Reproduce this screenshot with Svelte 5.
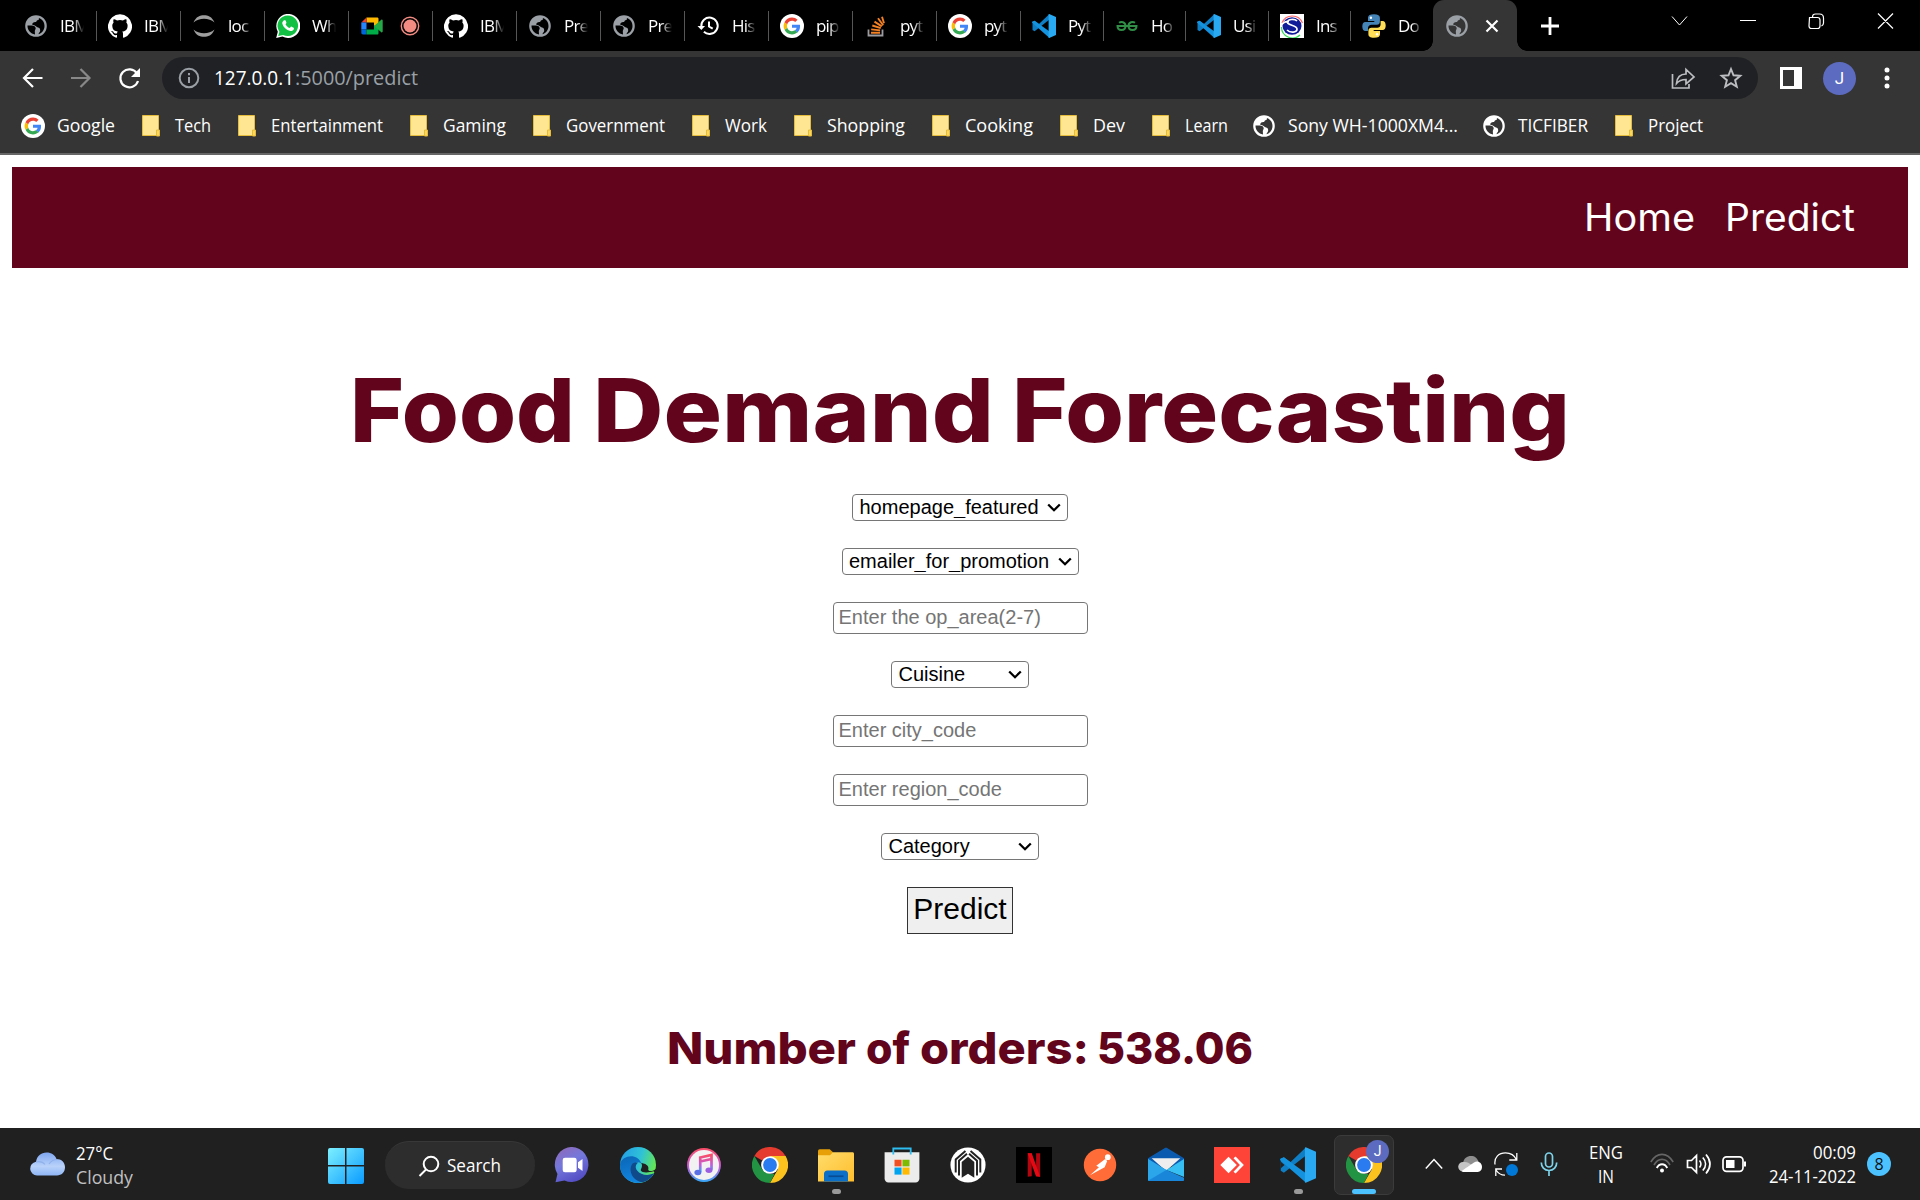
<script>
  const tabs = [
    { icon: 'globe', label: 'IBM', w: 84 },
    { icon: 'github', label: 'IBM', w: 84 },
    { icon: 'jupyter', label: 'loc', w: 84 },
    { icon: 'whatsapp', label: 'Wh', w: 84 },
    { icon: 'meet', label: '', w: 84 },
    { icon: 'github', label: 'IBM', w: 84 },
    { icon: 'globe', label: 'Pre', w: 84 },
    { icon: 'globe', label: 'Pre', w: 84 },
    { icon: 'history', label: 'His', w: 84 },
    { icon: 'google', label: 'pip', w: 84 },
    { icon: 'stack', label: 'pyt', w: 84 },
    { icon: 'google', label: 'pyt', w: 84 },
    { icon: 'vscode', label: 'Pyt', w: 83 },
    { icon: 'geeks', label: 'Ho', w: 82 },
    { icon: 'vscode', label: 'Usi', w: 83 },
    { icon: 'scaler', label: 'Ins', w: 82 },
    { icon: 'python', label: 'Do', w: 82 }
  ];
  const bookmarks = [
    ['google', 'Google', 58], ['folder', 'Tech', 36], ['folder', 'Entertainment', 112],
    ['folder', 'Gaming', 63], ['folder', 'Government', 99], ['folder', 'Work', 42],
    ['folder', 'Shopping', 78], ['folder', 'Cooking', 68], ['folder', 'Dev', 32],
    ['folder', 'Learn', 43], ['globe', 'Sony WH-1000XM4...', 170], ['globe', 'TICFIBER', 70],
    ['folder', 'Project', 55]
  ];
  const apps = ['chat', 'edge', 'itunes', 'chrome', 'explorer', 'store', 'hex', 'netflix', 'postman', 'mail', 'anydesk', 'vscode', 'chrome'];
</script>

{#snippet fit(text, w, kind = '')}
  <svg class="fit {kind}" width={w} height="24"><text x="0" y="18" textLength={w} lengthAdjust="spacingAndGlyphs">{text}</text></svg>
{/snippet}

{#snippet dropdown(label, kind)}
  <div class="dropdown {kind}">
    <select><option>{label}</option></select>
    <svg width="14" height="9"><path d="m1.200 1.500 5.800 5.700 5.800-5.700" fill="none" stroke="#000" stroke-width="2.300"/></svg>
  </div>
{/snippet}

{#snippet icon(name)}
  <svg class="icon {name}" viewBox="0 0 24 24">
    {#if name === 'globe'}
      <path fill="currentColor" d="M12 1.2a10.800 10.800 0 1 0 0 21.600a10.800 10.800 0 0 0 0-21.600zM11 20.400C6.600 19.800 3.500 16.200 3.500 12v-.6h4.300c2.300 0 3.900 1.200 3.900 2.900 0 1.200-.9 1.700-.9 3zm3.600-.2c-.2-1.300 1.600-1.900 1.600-3.700 0-3.300-2.600-2.400-3.900-3.900-1-1.200-1.900-1.700-3.900-1.700-.4-2.100 1.200-2.900 2.900-2.900 1.800 0 .8-1.800 2.700-2 .8-.1 1-.9.9-2.100 3.300 1 5.600 4.200 5.600 8.100 0 3.900-2.500 7.100-5.900 8.200z"/>
    {:else if name === 'github'}
      <path fill="#fff" d="M12 .3a12 12 0 0 0-3.8 23.400c.6.1.8-.3.8-.6v-2c-3.300.7-4-1.600-4-1.600-.600-1.400-1.400-1.800-1.400-1.800-1-.7.1-.7.1-.7 1.200 0 1.900 1.200 1.900 1.200 1 1.800 2.800 1.300 3.500 1 0-.8.4-1.300.7-1.600-2.700-.3-5.500-1.300-5.500-6 0-1.200.5-2.300 1.300-3.100-.2-.4-.6-1.600 0-3.200 0 0 1-.3 3.400 1.200a11.500 11.500 0 0 1 6 0c2.300-1.500 3.300-1.200 3.300-1.200.6 1.600.2 2.800 0 3.200.9.8 1.300 1.900 1.300 3.200 0 4.600-2.800 5.600-5.500 5.900.5.4.9 1 .9 2.200v3.300c0 .3.1.7.8.6A12 12 0 0 0 12 .3"/>
    {:else if name === 'jupyter'}
      <path fill="#9e9e9e" d="M1.500 8.500C4 2.500 8 1.200 12 1.200s8 1.300 10.500 7.300C19.500 6 16 4.800 12 4.800S4.500 6 1.500 8.500zM1.500 15.500C4 21.500 8 22.800 12 22.800s8-1.300 10.500-7.300c-3 2.500-6.500 3.700-10.500 3.700S4.500 18 1.500 15.500z"/>
    {:else if name === 'whatsapp'}
      <path fill="#fff" d="M.2 24l1.600-6.200A12 12 0 1 1 6.400 22.400z"/>
      <path fill="#12c143" d="M2.200 22l1.200-4.300a10.300 10.300 0 1 1 3.700 3.200z"/>
      <path fill="#fff" d="M8.200 6.300c.5-.3 1.200-.2 1.400.3l.8 2c.1.400 0 .6-.3 1l-.6.7c1 1.900 2.300 3 4.200 3.800l1-1.200c.3-.3.5-.4.9-.2l2 1c.5.3.4.900.2 1.500-.5 1.300-2.200 2-3.500 1.700-4.200-1-7-3.700-8-7.200-.3-1.400.7-2.800 1.900-3.400z"/>
    {:else if name === 'meet'}
      <path fill="#ffba00" d="M6.500 3.500H17c1 0 1.500.5 1.500 1.500v4.500L14 13V8.500H6.500z"/>
      <path fill="#ea4335" d="M6.500 3.500v5H1.300z"/><path fill="#2684fc" d="M1.300 8.500h5.200v7H1.300z"/>
      <path fill="#0066da" d="M1.300 15.500h5.200v5H3c-1 0-1.700-.7-1.700-1.700z"/>
      <path fill="#00ac47" d="M6.500 15.500H14V11l4.500 3.500V19c0 1-.5 1.500-1.500 1.500H6.500z"/>
      <path fill="#24a947" d="M14 12l7.300-6.200c.5-.5 1.400-.1 1.400.6v11.200c0 .7-.9 1.100-1.400.6z"/>
    {:else if name === 'record'}
      <circle cx="12" cy="12" r="8.700" fill="none" stroke="#f28b82" stroke-width="1.400"/><circle cx="12" cy="12" r="6.500" fill="#f28b82"/>
    {:else if name === 'history'}
      <path fill="none" stroke="#fff" stroke-width="2" d="M5.300 12.500a8.200 8.200 0 1 1 2.600 5.300M13 7.500v5l3.700 2.200"/><path fill="#fff" d="M1.500 12h7.600l-3.800 4z"/>
    {:else if name === 'google'}
      <circle cx="12" cy="12" r="12" fill="#fff"/>
      <g transform="translate(3.600 3.600) scale(.7)">
        <path fill="#4285f4" d="M23.500 12.300c0-.9-.1-1.500-.2-2.200H12v4.500h6.500c-.1 1.100-.8 2.700-2.400 3.800l3.700 2.900c2.300-2 3.700-5 3.700-9z"/>
        <path fill="#34a853" d="M12 24c3.200 0 6-1.100 7.900-2.900l-3.700-2.900c-1 .7-2.400 1.200-4.200 1.200-3.200 0-5.900-2.100-6.800-5l-3.900 3A12 12 0 0 0 12 24z"/>
        <path fill="#fbbc05" d="M5.200 14.400a7.400 7.400 0 0 1 0-4.800l-3.900-3a12 12 0 0 0 0 10.800z"/>
        <path fill="#ea4335" d="M12 4.600c2.300 0 3.800 1 4.600 1.800L20 3.100A11.600 11.600 0 0 0 12 0C7.300 0 3.300 2.700 1.300 6.600l3.900 3c1-2.900 3.600-5 6.800-5z"/>
      </g>
    {:else if name === 'stack'}
      <path fill="none" stroke="#9b9ba0" stroke-width="1.800" d="M4.500 15.500v6h14v-6"/>
      <path fill="none" stroke="#f48024" stroke-width="1.900" d="M7 18.800h9M7.200 15.400l8.900 1M8.300 11.500l8.500 2.600M10.500 7.600l7.300 4.800M14 4.200l5.200 7M18 2.800l2 6.500"/>
    {:else if name === 'vscode'}
      <path fill="#0f7ec4" d="M17.200.3 6.900 10.100 2.600 6.800.5 7.900v8l2.100 1.300L17.500 5.500z"/>
      <path fill="#222" class="gap" d="M.4 9.600v4.800L3 12z"/>
      <path fill="#1592dd" d="M2.600 6.800.5 7.600c-.7.500-.6 1 0 1.500L17.200 23.700l1-5.600z"/>
      <path fill="#29a9f2" d="M17.200.1 24 3.100v17.800L17.200 23.900c-.7 0-.7-.5-.6-1V1c0-.5 0-.8.6-.9z"/>
    {:else if name === 'geeks'}
      <path fill="none" stroke="#2f8d46" stroke-width="2" d="M4 8.700c2-1.400 6.500-.9 6.500 3.300 0 5.400-8 5.400-8 0h19c0 5.400-8 5.400-8 0 0-4.200 4.500-4.700 6.500-3.300"/>
    {:else if name === 'scaler'}
      <path fill="#fff" d="M0 0h24v24H0z"/><path fill="none" stroke="#f66" stroke-width="1.200" d="M2 9A11 11 0 0 1 22.500 9"/><path fill="none" stroke="#3d5" stroke-width="1.200" d="M1.500 13A11 11 0 0 0 20 21"/>
      <ellipse cx="12" cy="12" rx="9.500" ry="8.700" fill="#111c99"/><path fill="none" stroke="#fff" stroke-width="1.700" d="M17 7c-3-3-10-1.500-9.500 1.500S17 11 17 15s-7 4-10 1M1 11c3-3 5-4 8-3.500"/>
    {:else if name === 'python'}
      <path fill="#4584b6" d="M12 .3c-4 0-6 1-6 3.500V7h6.300v1H3.500C1.200 8 .3 10 .3 12.500s1 4.500 3.200 4.500H6v-3c0-2 1.500-3.300 3.500-3.300h5.400c1.700 0 3-1.300 3-3V3.800C17.900 1.500 16 .3 12 .3z"/>
      <path fill="#ffde57" d="M12 23.700c4 0 6-1 6-3.500V17h-6.300v-1h8.800c2.300 0 3.200-2 3.200-4.500S22.700 7 20.500 7H18.600v3.500c0 2-1.500 3.300-3.500 3.300H9.400c-1.700 0-3 1.300-3 3v3.400c0 2.300 1.600 3.500 5.600 3.500z"/>
      <circle cx="8.900" cy="3.800" r="1.200" fill="#fff"/><circle cx="15.100" cy="20.200" r="1.200" fill="#fff"/>
    {:else if name === 'folder'}
      <path fill="#ffe693" stroke="#e5bc3c" d="M3.500 1.500h16v20h-16z"/><path fill="#fbd75b" stroke="#e5bc3c" d="M17.500 22v-6h3v6z"/>
    {:else if name === 'chat'}
      <path fill="url(#chatG)" d="M1 23.500 2.300 18A11.200 11.700 0 1 1 7 22.300z"/>
      <rect x="5.800" y="7.200" width="9.300" height="9.600" rx="1.500" fill="#fff"/><path fill="#fff" d="M16 10.200 19 8v8l-3-2.200z"/>
    {:else if name === 'edge'}
      <circle cx="12" cy="12" r="12" fill="url(#edgeT)"/>
      <path fill="url(#edgeB)" d="M0 11.500C1.500 5 12 4 14.200 11c-4-2.500-6 1.500-3.500 5 3.300 4 8.300 3.300 12 1.500C19 24 11.500 25 7.500 23 3 21.300 0 17.500 0 11.500z"/>
      <path fill="#114a8b" d="M8.200 11.200C5 16 9 23 15 23.500c3.500-.8 6-3 7.400-5.800-4 1.800-8.700 1-11-2-1.500-2-1-4 .6-5.200-1.500-.3-3 .1-3.800.7z"/>
      <path fill="#202020" d="M14 10.500c1.500 2 0 4-.2 5 .7 2 5.500 1.600 8.500.7L24 18v-3.500c-2 2-5 2-5.200.5.5-1.500 0-3.500-4.800-4.500z"/>
    {:else if name === 'itunes'}
      <circle cx="12" cy="12" r="11.300" fill="url(#tunes)"/><circle cx="12" cy="12" r="10" fill="#f2f2f2"/>
      <path fill="none" stroke="url(#tunes)" stroke-width="1.800" d="M9.500 16.800V7l7.500-1.700v9.800M9.500 9.700 17 8"/><ellipse cx="7.900" cy="17" rx="2.300" ry="1.800" fill="#5b6fe8"/><ellipse cx="15.300" cy="15.500" rx="2.300" ry="1.800" fill="#9b5fe0"/>
    {:else if name === 'chrome'}
      <path fill="#e53a2e" d="M12 12 1.600 6A12 12 0 0 1 22.400 6z"/>
      <path fill="#fcc31e" d="M12 6h10.400A12 12 0 0 1 12 24l5.200-9z"/>
      <path fill="#229342" d="M1.600 6 6.800 15 12 18l3 0L12 24A12 12 0 0 1 1.600 6z"/>
      <circle cx="12" cy="12" r="5.900" fill="#fff"/><circle cx="12" cy="12" r="4.600" fill="#2a7af0"/>
    {:else if name === 'explorer'}
      <path fill="#e8a009" d="M0 3c0-1 .4-1.500 1.300-1.500h6.500L10 3.500v4H0z"/><path fill="url(#fold)" d="M0 5.500h8l2-2h13c.6 0 1 .4 1 1v18.500H0z"/>
      <path fill="#0b6fc7" d="M4 23v-5c0-1.500.8-2.300 2.300-2.300h11.400c1.500 0 2.300.8 2.300 2.300v5z"/><path stroke="#084c94" stroke-width="1.100" d="M7 19.500h10"/>
    {:else if name === 'store'}
      <path fill="none" stroke="#2ebdf0" stroke-width="1.200" d="M6.200 5V1h11.600v4"/><path fill="#ececec" d="M.4 3.500h23.200V21c0 1.600-1 2.600-2.600 2.600H3C1.400 23.600.4 22.600.4 21z"/><path fill="none" stroke="#2ebdf0" stroke-width="1.200" d="M6.200 3.300V5M17.800 3.300V5"/>
      <path fill="#f25022" d="M7 8.500h4.700v4.400H7z"/><path fill="#7fba00" d="M12.300 8.500H17v4.400h-4.700z"/><path fill="#00a4ef" d="M7 13.700h4.700v4.700H7z"/><path fill="#ffb900" d="M12.300 13.700H17v4.700h-4.700z"/>
    {:else if name === 'hex'}
      <circle cx="12" cy="12" r="11.700" fill="#fff"/>
      <path fill="none" stroke="#222" stroke-width="1.300" d="M3.800 17V8.300l6.500-5.600M20.200 17V8.300l-6.500-5.600M6 19V9.200l5.300-4.700M18 19V9.200l-5.300-4.700"/><path fill="#222" d="M7.800 20.500V10l4.200-3.500 4.200 3.500v10.500L12 17.800z"/><path fill="#fff" d="M9 19.500V10.700l2.300-2v9l.7-.5.7.5v-9l2.300 2v8.800" opacity="0"/>
    {:else if name === 'netflix'}
      <path d="M0 0h24v24H0z"/><path fill="#b1060f" d="M7.800 4.200h2.700v15.300l-2.700.3zM13.400 4.200h2.700v15.600l-2.700-.3z"/><path fill="#e50914" d="M7.800 4.200h2.700l5.600 15.600-2.800-.3z"/>
    {:else if name === 'postman'}
      <circle cx="12" cy="12" r="10.800" fill="#ff6c37"/><circle cx="17.200" cy="6.800" r="1.900" fill="#fff"/>
      <path fill="#fff" d="M15.500 8 9.500 12.500l1.800 1-6 5.300 9.800-5.300 1.700-4.200z"/>
    {:else if name === 'mail'}
      <path fill="#0a5bb0" d="M0 7.500 11 .8c.7-.4 1.300-.4 2 0l11 6.700v5H0z"/><path fill="#eee" d="M2.500 7.500h19L12 16z"/>
      <path fill="#1d8fe0" d="M0 8l12.500 7.500 8 7.200H.7c-.4 0-.7-.3-.7-.7z"/><path fill="#35bff2" d="M24 8v12L12.200 15.300z"/><path fill="#1a86d9" d="M12 15.200 24 20.500V22c0 .4-.3.700-.7.700H.7z"/><path fill="#2ba6ea" d="M0 22.300 12.200 15.300 6 11.600 0 8z"/>
    {:else if name === 'anydesk'}
      <path fill="#fe4338" d="M0 0h24v24H0z"/><path fill="#fff" d="m9.700 6.500 5.500 5.500-5.500 5.500L4.200 12zM13 7.500l1.400-1.200 5.500 5.700-5.500 5.700L13 16.500l4.300-4.500z"/>
    {/if}
  </svg>
{/snippet}

<svg class="defs" width="0" height="0">
  <defs>
    <linearGradient id="chatG" x1="0" y1="0" x2=".5" y2="1"><stop offset="0" stop-color="#9268b4"/><stop offset=".5" stop-color="#7478dc"/><stop offset="1" stop-color="#5650c6"/></linearGradient>
    <linearGradient id="edgeT" x1="0" y1=".2" x2="1" y2=".5"><stop offset="0" stop-color="#239ee8"/><stop offset=".55" stop-color="#2fc2d6"/><stop offset="1" stop-color="#66e84e"/></linearGradient>
    <linearGradient id="edgeB" x1="0" y1="0" x2=".4" y2="1"><stop offset="0" stop-color="#0b65b5"/><stop offset="1" stop-color="#1186e0"/></linearGradient>
    <linearGradient id="tunes" x1=".5" y1="0" x2=".5" y2="1"><stop offset="0" stop-color="#fa4d66"/><stop offset=".55" stop-color="#c55cd8"/><stop offset="1" stop-color="#35a8f8"/></linearGradient>
    <linearGradient id="fold" x1="0" y1="0" x2="1" y2="1"><stop offset="0" stop-color="#ffdc6b"/><stop offset="1" stop-color="#ffbe2d"/></linearGradient>
    <linearGradient id="win" gradientUnits="userSpaceOnUse" x1="0" y1="0" x2="36" y2="36"><stop offset="0" stop-color="#7df0ff"/><stop offset="1" stop-color="#0a9bff"/></linearGradient>
    <linearGradient id="cloudG" x1="0" y1="0" x2="0" y2="1"><stop offset="0" stop-color="#7ea6f0"/><stop offset=".6" stop-color="#b9d2fa"/><stop offset="1" stop-color="#8fb5f5"/></linearGradient>
  </defs>
</svg>

<div class="screen">
  <div class="tabstrip">
    {#each tabs as t, i}
      <div class="tab" class:last={i === tabs.length - 1} style="width:{t.w}px">
        {@render icon(t.icon)}
        {#if t.label}<span>{t.label}</span>{:else}{@render icon('record')}{/if}
      </div>
    {/each}
    <div class="active">
      {@render icon('globe')}
      <svg width="14" height="14" viewBox="0 0 14 14"><path d="m1.500 1.500 11 11m0-11-11 11" stroke="#fff" stroke-width="2.200"/></svg>
    </div>
    <svg class="plus" width="20" height="20"><path d="M10 1v18M1 10h18" stroke="#fff" stroke-width="2.800"/></svg>
    <svg class="winctl" width="224" height="18" fill="none" stroke="#fff" stroke-width="1.200">
      <path stroke-width="1" d="m1 4.500 7.500 8.500L16 4.500"/>
      <path d="M69 8.500h16M138.500 5.500h8q2.500 0 2.500 2.500v6q0 2.500-2.500 2.500h-6q-2.500 0-2.500-2.500zM141.500 5q0-3 3-3h4q4 0 4 4v5q0 2-2 3M207 1.500l15 15m0-15-15 15"/>
    </svg>
  </div>

  <div class="toolbar">
    <svg width="142" height="30" viewBox="0 0 142 30" fill="none" stroke-width="2.200">
      <path stroke="#fff" d="M42.500 15H25M33 6l-9 9 9 9"/><path stroke="#888" d="M71 15h17.500M80.500 6l9 9-9 9"/>
      <path stroke="#fff" d="M137 10.500A9 9 0 1 0 138 18"/><path fill="#fff" d="M140 5v9h-9z"/>
    </svg>
    <div class="omnibox">
      <svg width="24" height="24" fill="none" stroke="#9aa0a6" stroke-width="2"><circle cx="12" cy="12" r="9.300"/><path d="M12 11v6M12 7v2.200"/></svg>
      <div class="url">{@render fit('127.0.0.1', 80, 'host')}{@render fit(':5000/predict', 123, 'path')}</div>
      <svg width="72" height="26" fill="none" stroke="#bcbec2" stroke-width="1.700">
        <path d="M1.500 9v14h16.500v-4M5.500 18.500c.5-6 4-9.500 9.500-9.500V4.500l8 7.500-8 7v-4.500c-4 0-7 1-9.500 4z"/>
        <path stroke-width="1.900" d="m60 4 2.500 6.300 6.800.5-5.200 4.400 1.700 6.600-5.800-3.600-5.800 3.600 1.700-6.600-5.200-4.400 6.800-.5z"/>
      </svg>
    </div>
    <svg class="panel" width="22" height="22"><path d="M1.500 1.500h19v19h-19z" fill="none" stroke="#fff" stroke-width="3"/><path d="M14 1h7v20h-7z" fill="#fff"/></svg>
    <div class="avatar">J</div>
    <svg width="6" height="22" fill="#fff"><circle cx="3" cy="3" r="2.500"/><circle cx="3" cy="11" r="2.500"/><circle cx="3" cy="19" r="2.500"/></svg>
  </div>

  <div class="bookmarks">
    {#each bookmarks as [ic, label, w]}
      <div class="bm">{@render icon(ic)}{@render fit(label, w)}</div>
    {/each}
  </div>

  <main>
    <nav>
      <svg width="272" height="60"><text x="0" y="43" textLength="111" lengthAdjust="spacingAndGlyphs">Home</text><text x="141" y="43" textLength="130" lengthAdjust="spacingAndGlyphs">Predict</text></svg>
    </nav>
    <h1>
      <svg width="1220" height="110">
        <text x="0" y="74" textLength="225" lengthAdjust="spacingAndGlyphs">Food</text>
        <text x="243" y="74" textLength="401" lengthAdjust="spacingAndGlyphs">Demand</text>
        <text x="662" y="74" textLength="558" lengthAdjust="spacingAndGlyphs">Forecasting</text>
      </svg>
    </h1>
    <form>
      {@render dropdown('homepage_featured', 's1')}
      {@render dropdown('emailer_for_promotion', 's2')}
      <input placeholder="Enter the op_area(2-7)" />
      {@render dropdown('Cuisine', 's3')}
      <input placeholder="Enter city_code" />
      <input placeholder="Enter region_code" />
      {@render dropdown('Category', 's4')}
      <button type="button">Predict</button>
    </form>
    <h2>
      <svg width="588" height="60">
        <text x="1" y="44" textLength="189" lengthAdjust="spacingAndGlyphs">Number</text>
        <text x="200" y="44" textLength="44" lengthAdjust="spacingAndGlyphs">of</text>
        <text x="254" y="44" textLength="169" lengthAdjust="spacingAndGlyphs">orders:</text>
        <text x="431" y="44" textLength="156" lengthAdjust="spacingAndGlyphs">538.06</text>
      </svg>
    </h2>
  </main>

  <footer>
    <div class="weather">
      <svg width="36" height="24"><path fill="url(#cloudG)" d="M8 23.500a7.500 7 0 0 1-1-13.800C8 4 12 .5 17.500.5c5 0 8.500 2.500 10 6.500 5 0 8.500 3.500 8.500 8.300 0 5-3.500 8.200-8 8.200z"/><path fill="none" stroke="#86a8e6" stroke-width="1.200" opacity=".7" d="M7 10c4-1 7 0 9 2.500M20 12c2-3 4-4.500 8-4.500"/></svg>
      <div>{@render fit('27°C', 37)}{@render fit('Cloudy', 57, 'dim')}</div>
    </div>
    <svg class="start" width="36" height="36" fill="url(#win)"><path d="M2 0h15v17H0V2q0-2 2-2zM18.500 0H34q2 0 2 2v15H18.500zM0 18.500h17V36H2q-2 0-2-2zM18.500 18.500H36V34q0 2-2 2H18.500z"/></svg>
    <div class="search">
      <svg width="22" height="22" fill="none" stroke="#fff" stroke-width="2"><circle cx="13" cy="9" r="7.300"/><path d="M8 14.500 1.500 21"/></svg>
      {@render fit('Search', 54)}
    </div>
    <div class="apps">
      {#each apps as a, i}
        <div class="app" class:current={i === 12} class:open={i === 4 || i === 11}>
          {@render icon(a)}
          {#if i === 12}<b>J</b>{/if}
        </div>
      {/each}
    </div>
    <div class="tray">
      <svg width="18" height="24" fill="none" stroke="#fff" stroke-width="1.500"><path d="m.8 16.500 8.200-9 8.200 9"/></svg>
      <svg width="24" height="24"><path fill="#8e8e8e" d="M5 11C6 6 9 4 13 4c4 0 6 2 7.500 5.500L9 18z"/><path fill="#c4c4c4" d="M4.500 19.500A4.700 4.700 0 0 1 5.500 10c3-.5 5 .5 9 3.500l-9 6z"/><path fill="#fff" d="M3.500 19c3-2 9-6 12.500-8.500 4-2.500 8 .5 8 4.500s-3 5-5 5H5z"/></svg>
      <svg width="24" height="24" fill="none" stroke="#fff" stroke-width="1.300"><path d="M1 12.500C0 5 5 .8 11.500.8c5 0 9 2.500 11 7M22.800 1v7h-7.500M8 17H1.800v7M2 18c2 3 5 5.300 9 5.200"/><circle cx="18" cy="18" r="6" fill="#0078d7" stroke="none"/></svg>
      <svg width="18" height="24" fill="none" stroke="#7cd3ea" stroke-width="1.700"><rect x="5.500" y="1" width="7" height="14" rx="3.500"/><path d="M1.300 10.500c0 4.500 3 8 7.700 8s7.700-3.500 7.700-8M9 18.500V24"/></svg>
      <div class="lang">{@render fit('ENG', 34)}{@render fit('IN', 16)}</div>
      <svg width="24" height="24" fill="none" stroke-width="1.600"><path stroke="#666" d="M.8 10C7-.2 17-.2 23.200 10M4 13c4-7.500 12-7.500 16 0"/><path stroke="#fff" stroke-width="1.900" d="M6.800 16c2.500-5 8-5 10.400 0"/><circle cx="12" cy="18.500" r="2" fill="#fff"/></svg>
      <svg width="26" height="24" fill="none" stroke="#fff" stroke-width="1.700"><path d="M1.500 8.500h4l5-5v17l-5-5h-4zM13.500 8.500c1.800 2 1.800 5 0 7M16.800 5.500c3.600 4 3.600 9 0 13M20 2.500c5 6 5 13 0 19"/></svg>
      <svg width="25" height="24" fill="none" stroke="#fff" stroke-width="1.700"><rect x="1" y="4.800" width="20" height="14.500" rx="3.500"/><path fill="#fff" stroke="none" d="M4 8h8.500v8H4zM22 9.500h2v5h-2z"/></svg>
      <div class="clock">{@render fit('00:09', 43)}{@render fit('24-11-2022', 87)}</div>
      <div class="badge">8</div>
    </div>
  </footer>
</div>

<style>
  :global(body) { margin: 0; background: #fff; overflow: hidden; }
  .defs { position: absolute; }
  .screen { width: 1920px; height: 1200px; display: flex; flex-direction: column; font-family: 'Open Sans', 'Noto Sans', sans-serif; font-size: 17.5px; color: #fff; }
  svg { display: block; flex: none; }
  .icon { width: 24px; height: 24px; }
  .gap { display: none; }
  .app .gap { display: block; }
  .fit { overflow: visible; fill: currentColor; }
  .dim { color: #c0c0c0; }

  .tabstrip { height: 51px; background: #000; display: flex; flex: none; padding-left: 13px; }
  .tab { box-sizing: border-box; height: 30px; margin-top: 11px; padding-left: 11px; display: flex; align-items: center; border-right: 1px solid #565656; flex: none; }
  .tab.last { border-color: transparent; }
  .tab span { width: 24px; margin: -2px 0 0 12px; overflow: hidden; white-space: nowrap; font-size: 17px; letter-spacing: -.8px; mask-image: linear-gradient(90deg, #000 55%, transparent); }
  .tab .globe, .active .globe { color: #9aa0a6; }
  .tab .record { margin-left: 14px; }
  .active { width: 84px; height: 51px; background: #353535; border-radius: 11px 11px 0 0; box-sizing: border-box; padding: 0 18px 9px 12px; display: flex; align-items: center; justify-content: space-between; position: relative; }
  .active::before, .active::after { content: ''; position: absolute; bottom: 0; width: 10px; height: 10px; }
  .active::before { left: -10px; background: radial-gradient(circle at 0 0, transparent 9.500px, #353535 10px); }
  .active::after { right: -10px; background: radial-gradient(circle at 100% 0, transparent 9.500px, #353535 10px); }
  .active svg { margin-top: 9px; }
  .plus { margin: 16px 0 0 23px; }
  .winctl { margin: 12px 0 0 111px; }

  .toolbar { height: 54px; background: #353535; display: flex; flex: none; align-items: center; }
  .omnibox { width: 1596px; height: 42px; margin-left: 20px; box-sizing: border-box; padding: 0 15px; border-radius: 21px; background: #202124; display: flex; align-items: center; }
  .url { display: flex; gap: 1px; margin-left: 13px; flex: 1; font-size: 20px; }
  .url .fit { transform: translateY(1px); }
  .path { color: #9aa0a6; }
  .panel { margin-left: 22px; }
  .avatar { width: 33px; height: 33px; margin: 0 28px 0 21px; border-radius: 50%; background: #5c6bc0; text-align: center; font: 17px/33px Roboto, sans-serif; }

  .bookmarks { height: 48px; background: #353535; border-bottom: 2px solid #666; display: flex; flex: none; gap: 24px; padding-left: 21px; }
  .bm { display: flex; gap: 12px; height: 42px; align-items: center; }

  main { height: 973px; display: flex; flex-direction: column; align-items: center; flex: none; }
  nav { width: 1896px; height: 101px; margin-top: 12px; box-sizing: border-box; padding: 21px 52px 0 0; background: #62041b; display: flex; justify-content: flex-end; font-family: Inter, sans-serif; font-size: 37.500px; fill: #fff; }
  h1 { margin: 100px 0 0; fill: #62041b; font: 800 88px Inter, sans-serif; height: 126px; }
  h1 svg, h2 svg { overflow: visible; }
  form { display: flex; flex-direction: column; align-items: center; gap: 27px; }
  select, input, button { box-sizing: border-box; margin: 0; font: 20px 'Liberation Sans', Arial, sans-serif; color: #000; }
  .dropdown { display: grid; height: 27px; }
  .dropdown > * { grid-area: 1 / 1; }
  .dropdown svg { justify-self: end; align-self: center; margin-right: 7px; pointer-events: none; }
  select { appearance: none; width: 100%; height: 27px; background: #fff; border: 1px solid #767676; border-radius: 4px; padding: 0 0 2px 6.500px; }
  .s1 { width: 216px; } .s2 { width: 237px; } .s3 { width: 138px; } .s4 { width: 158px; }
  input { width: 255px; height: 32px; border: 1.500px solid #767676; border-radius: 4px; padding: 0 4px 2px 5px; }
  input::placeholder { color: #757575; }
  button { width: 106px; height: 47px; border: 1px solid #333; background: #efefef; font-size: 30px; padding: 0 0 3px; }
  h2 { margin: 86px 0 0; fill: #62041b; font: 800 44px Inter, sans-serif; }

  footer { height: 72px; flex: none; background: #202020; display: flex; align-items: center; }
  .weather { display: flex; align-items: center; gap: 11px; margin-left: 29px; width: 299px; }
  .weather > div { margin-top: 4px; }
  .start { margin-top: 3px; }
  .search { width: 150px; height: 48px; margin: 2px 0 0 21px; border-radius: 24px; background: #2d2d2d; border-top: 1px solid #383838; box-sizing: border-box; display: flex; align-items: center; gap: 7px; padding-left: 33px; }
  .apps { display: flex; gap: 6px; margin-left: 7px; }
  .app { position: relative; width: 60px; height: 60px; margin-top: 2px; display: flex; align-items: center; justify-content: center; box-sizing: border-box; }
  .app .icon { width: 36px; height: 36px; }
  .current { background: #2d2d2d; border: 1px solid #3b3b3b; border-radius: 7px; }
  .open::after, .current::after { content: ''; position: absolute; bottom: 1px; width: 9px; height: 5px; border-radius: 3px; background: #9a9a9a; }
  .current::after { width: 24px; background: #4cc2ff; bottom: 0; }
  .app b { position: absolute; top: 4px; right: 4px; width: 23px; height: 23px; border-radius: 50%; background: #5c6bc0; font: 14px/23px Roboto, sans-serif; text-align: center; }
  .tray { display: grid; grid-template-columns: 33px 36px 46px 49px 61px 36px 36px 47px 98px 24px; align-items: center; margin-left: 31px; }
  .lang, .clock { display: flex; flex-direction: column; align-items: center; width: 34px; margin-top: 2px; }
  .clock { width: 87px; align-items: flex-end; }
  .badge { width: 24px; height: 24px; border-radius: 50%; background: #4cc2ff; color: #111; font-size: 16px; line-height: 24px; text-align: center; }
</style>
